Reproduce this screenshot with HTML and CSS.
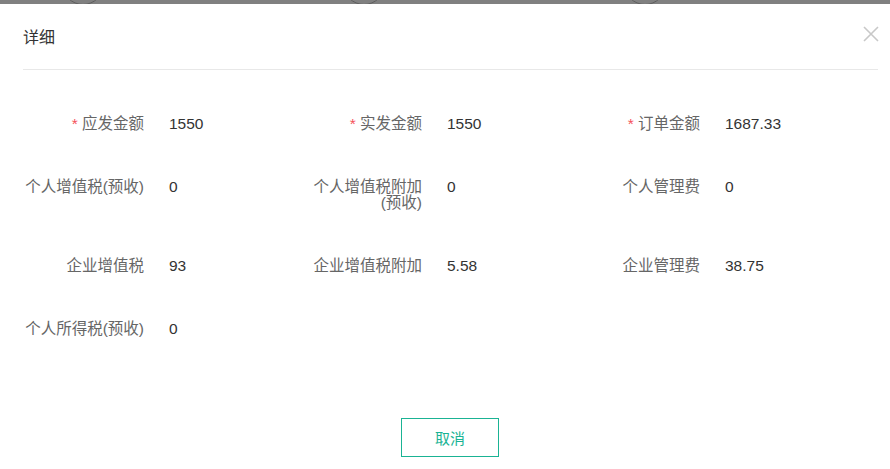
FILE: index.html
```html
<!DOCTYPE html>
<html lang="zh">
<head>
<meta charset="utf-8">
<title>详细</title>
<link rel="stylesheet" href="styles.css">
</head>
<body>
<div class="backdrop">
  <span class="ring"></span><span class="ring"></span><span class="ring"></span>
</div>
<div class="modal">
  <div class="modal-header">
    <span class="modal-title">详细</span>
    <svg class="close" width="16" height="16" viewBox="0 0 16 16"><path d="M1 1L15 15M15 1L1 15" stroke="#c8c8c8" stroke-width="1.6" fill="none"/></svg>
  </div>
  <div class="modal-body">
    <div class="grid">
      <div class="item"><div class="label"><span class="req">*</span> 应发金额</div><div class="value">1550</div></div>
      <div class="item"><div class="label"><span class="req">*</span> 实发金额</div><div class="value">1550</div></div>
      <div class="item"><div class="label"><span class="req">*</span> 订单金额</div><div class="value">1687.33</div></div>
      <div class="item"><div class="label">个人增值税(预收)</div><div class="value">0</div></div>
      <div class="item"><div class="label">个人增值税附加<br>(预收)</div><div class="value">0</div></div>
      <div class="item"><div class="label">个人管理费</div><div class="value">0</div></div>
      <div class="item"><div class="label">企业增值税</div><div class="value">93</div></div>
      <div class="item"><div class="label">企业增值税附加</div><div class="value">5.58</div></div>
      <div class="item"><div class="label">企业管理费</div><div class="value">38.75</div></div>
      <div class="item"><div class="label">个人所得税(预收)</div><div class="value">0</div></div>
    </div>
  </div>
  <div class="modal-footer">
    <button class="btn">取消</button>
  </div>
</div>
</body>
</html>
```
FILE: styles.css
```css
html, body {
  margin: 0;
  padding: 0;
  background: #fff;
  font-family: "Liberation Sans", "Noto Sans CJK SC", sans-serif;
}
.backdrop {
  height: 4px;
  background: #808080;
  overflow: hidden;
  display: flex;
  padding-left: 62px;
  gap: 239px;
}
.ring {
  flex: none;
  width: 42px;
  height: 42px;
  margin-top: -37px;
  border: 1px solid #5e5e5e;
  border-radius: 50%;
  box-sizing: border-box;
}
.modal {
  background: #fff;
  height: 465px;
}
.modal-header {
  margin: 0 12px 0 23px;
  height: 65px;
  border-bottom: 1px solid #e8e8e8;
  display: flex;
  align-items: center;
  justify-content: space-between;
}
.modal-title {
  font-size: 16px;
  color: #333;
  margin-top: -2px;
}
.close {
  margin-right: -1px;
  margin-top: -5px;
}
.modal-body {
  padding: 46px 0 0 14px;
}
.grid {
  display: grid;
  grid-template-columns: 278px 278px 278px;
  row-gap: 47px;
}
.item {
  display: flex;
  align-items: flex-start;
}
.label {
  width: 130px;
  text-align: right;
  color: #666;
  font-size: 15.5px;
  line-height: 16px;
}
.req {
  color: #f5525b;
}
.value {
  margin-left: 25px;
  color: #333;
  font-size: 15.5px;
  line-height: 16px;
}
.modal-footer {
  padding-top: 81px;
  padding-left: 10px;
  display: flex;
  justify-content: center;
}
.btn {
  width: 98px;
  height: 39px;
  border: 1px solid #1ab394;
  background: #fff;
  color: #1ab394;
  font-family: "Liberation Sans", "Noto Sans CJK SC", sans-serif;
  font-size: 15px;
  padding: 0;
}
```
